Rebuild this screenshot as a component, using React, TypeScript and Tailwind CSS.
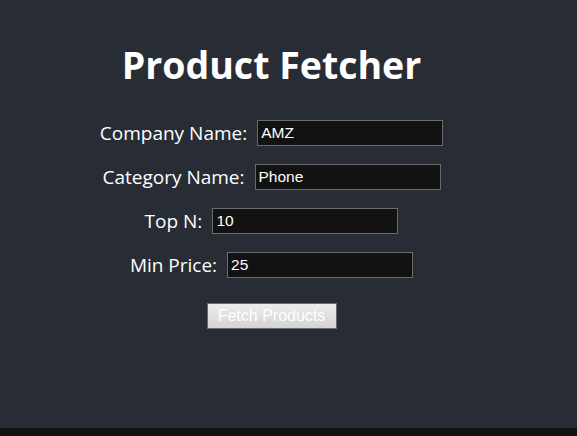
import { useState } from 'react'

const fields = [
  { key: 'company', label: 'Company Name:', value: 'AMZ' },
  { key: 'category', label: 'Category Name:', value: 'Phone' },
  { key: 'topN', label: 'Top N:', value: '10' },
  { key: 'minPrice', label: 'Min Price:', value: '25' },
]

export default function App() {
  const [values, setValues] = useState<Record<string, string>>(
    Object.fromEntries(fields.map((f) => [f.key, f.value])),
  )

  return (
    <div className="min-h-screen bg-[#121212]">
      <div className="h-[428px] bg-[#282c34] pr-[34px] text-white flex flex-col items-center pt-[39px]">
        <h1 className="font-['Open_Sans',sans-serif] font-bold text-[37.5px] leading-[52px] mb-[29px]">
          Product Fetcher
        </h1>

        <div className="flex flex-col items-center gap-[18px]">
          {fields.map((f) => (
            <div key={f.key} className="flex items-center gap-[10px]">
              <label className="font-['Open_Sans',sans-serif] text-[19px] leading-[26px]">{f.label}</label>
              <input
                value={values[f.key]}
                onChange={(e) => setValues({ ...values, [f.key]: e.target.value })}
                className="w-[186px] h-[26px] bg-[#121212] border border-[#6b6b6b] px-[3px] text-[15.5px] text-white font-['Liberation_Sans',Arial,sans-serif] outline-none"
              />
            </div>
          ))}
        </div>

        <button className="mt-[25px] w-[130px] h-[26px] border border-[#6b6b6b] bg-gradient-to-b from-[#ececec] to-[#d4d4d4] text-white text-[16px] font-['Liberation_Sans',Arial,sans-serif]">
          Fetch Products
        </button>
      </div>
    </div>
  )
}
